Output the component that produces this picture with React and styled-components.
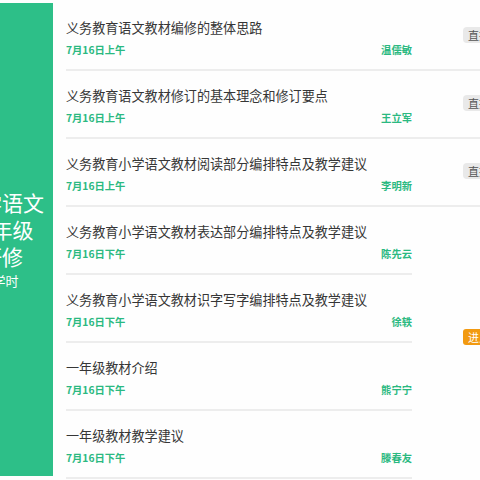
import React from "react";
import styled, { createGlobalStyle } from "styled-components";

const GlobalStyle = createGlobalStyle`
  html, body {
    margin: 0;
    padding: 0;
    background: #fefefe;
    overflow: hidden;
  }
  body {
    font-family: "Noto Sans CJK SC", "Noto Sans", sans-serif;
  }
`;

const Page = styled.div`
  display: flex;
  align-items: flex-start;
  width: 480px;
  height: 480px;
  overflow: hidden;
`;

const Banner = styled.aside`
  flex: 0 0 53px;
  height: 473px;
  margin-top: 3px;
  background: #2dbf88;
  overflow: hidden;
  display: flex;
  flex-direction: column;
  justify-content: center;
`;

const BannerText = styled.div`
  width: 120px;
  margin-left: -58px;
  text-align: center;
  color: #ffffff;
  margin-top: 1px;
`;

const BannerLine = styled.div`
  font-size: ${(p) => (p.$small ? "13px" : "21px")};
  line-height: ${(p) => (p.$small ? "22px" : "27px")};
  white-space: nowrap;
`;

const List = styled.main`
  position: relative;
  flex: 1 1 auto;
  margin-left: 13px;
  padding-top: 3px;
  min-width: 0;
`;

const Row = styled.div`
  display: flex;
  align-items: center;
  width: ${(p) => (p.$wide ? "600px" : "346px")};
  height: 66px;
  border-bottom: 2px solid #ededed;
`;

const Content = styled.div`
  flex: 0 0 346px;
  display: flex;
  flex-direction: column;
  padding-top: 3px;
`;

const Title = styled.div`
  font-size: 13.1px;
  line-height: 18px;
  color: #363636;
  white-space: nowrap;
`;

const Meta = styled.div`
  display: flex;
  justify-content: space-between;
  margin-top: 6px;
  font-size: 10.3px;
  line-height: 14px;
  font-weight: 700;
  color: #2bb981;
`;

const Badge = styled.span`
  margin-left: 51px;
  margin-top: -3px;
  padding: 0 5px;
  height: 16px;
  line-height: 16px;
  border-radius: 4px;
  font-size: 11px;
  background: #e9e9e9;
  color: #555555;
  white-space: nowrap;
`;

const EnterButton = styled.span`
  position: absolute;
  left: 397px;
  top: 329px;
  padding: 0 5px;
  height: 16px;
  line-height: 16px;
  border-radius: 3px;
  font-size: 11px;
  background: #f29a11;
  color: #ffffff;
  white-space: nowrap;
`;

const sessions = [
  { title: "义务教育语文教材编修的整体思路", time: "7月16日上午", speaker: "温儒敏", badge: "直播回放" },
  { title: "义务教育语文教材修订的基本理念和修订要点", time: "7月16日上午", speaker: "王立军", badge: "直播回放" },
  { title: "义务教育小学语文教材阅读部分编排特点及教学建议", time: "7月16日上午", speaker: "李明新", badge: "直播回放" },
  { title: "义务教育小学语文教材表达部分编排特点及教学建议", time: "7月16日下午", speaker: "陈先云" },
  { title: "义务教育小学语文教材识字写字编排特点及教学建议", time: "7月16日下午", speaker: "徐轶" },
  { title: "一年级教材介绍", time: "7月16日下午", speaker: "熊宁宁" },
  { title: "一年级教材教学建议", time: "7月16日下午", speaker: "滕春友" },
];

export default function App() {
  return (
    <>
      <GlobalStyle />
      <Page>
        <Banner>
          <BannerText>
            <BannerLine>小学语文</BannerLine>
            <BannerLine>一年级</BannerLine>
            <BannerLine>研修</BannerLine>
            <BannerLine $small>6学时</BannerLine>
          </BannerText>
        </Banner>
        <List>
          {sessions.map((s) => (
            <Row key={s.title} $wide={Boolean(s.badge)}>
              <Content>
                <Title>{s.title}</Title>
                <Meta>
                  <span>{s.time}</span>
                  <span>{s.speaker}</span>
                </Meta>
              </Content>
              {s.badge && <Badge>{s.badge}</Badge>}
            </Row>
          ))}
          <EnterButton>进入直播</EnterButton>
        </List>
      </Page>
    </>
  );
}
